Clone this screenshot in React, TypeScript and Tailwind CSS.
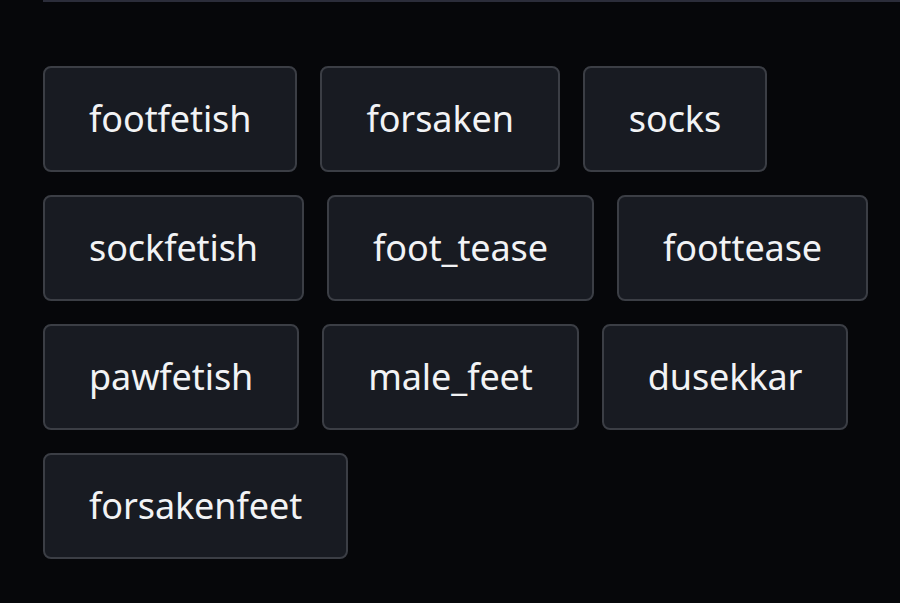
const tags = [
  "footfetish",
  "forsaken",
  "socks",
  "sockfetish",
  "foot_tease",
  "foottease",
  "pawfetish",
  "male_feet",
  "dusekkar",
  "forsakenfeet",
];

export default function App() {
  return (
    <div className="min-h-[603px] w-[900px] bg-[#06070a] overflow-hidden" style={{ fontFamily: '"Noto Sans", sans-serif' }}>
      <div className="ml-[43px] h-[2px] bg-[#2b2d3a]" />
      <div className="flex flex-wrap gap-x-[23px] gap-y-[23px] pl-[43px] pr-[20px] pt-[64px] w-[900px]">
        {tags.map((t) => (
          <div
            key={t}
            className="rounded-[8px] border-2 border-[#3b3e45] bg-[#181b22] px-[44px] h-[106px] flex items-center text-[36px] tracking-[-0.1px] text-[#f2f3f5] leading-none"
          >
            {t}
          </div>
        ))}
      </div>
    </div>
  );
}
